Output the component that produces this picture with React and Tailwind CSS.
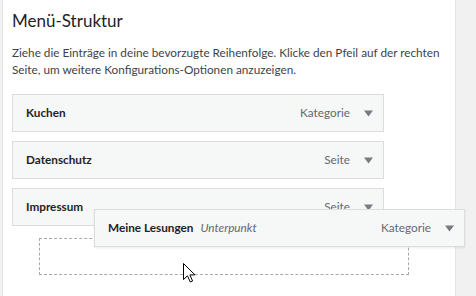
const items = [
  { title: "Kuchen", type: "Kategorie" },
  { title: "Datenschutz", type: "Seite" },
  { title: "Impressum", type: "Seite" },
];

function Arrow() {
  return (
    <svg width="9" height="7" viewBox="0 0 9 7" className="shrink-0">
      <path d="M0 0.5 H9 L4.5 6.5 Z" fill="#787c82" />
    </svg>
  );
}

function MenuItem({ title, type, sub }) {
  return (
    <div className="flex h-[38px] items-center border border-[#dcdcde] bg-[#f6f7f7] pl-[13px] pr-[10px]">
      <span className="font-bold text-[#1d2327]">{title}</span>
      {sub && <span className="ml-[7px] italic text-[#646970]">{sub}</span>}
      <span className="ml-auto text-[#646970]">{type}</span>
      <span className="ml-[14px]">
        <Arrow />
      </span>
    </div>
  );
}

function Cursor() {
  return (
    <svg width="13" height="20" viewBox="0 0 13 20" className="absolute left-[183px] top-[263px]">
      <path
        d="M0.5 0.5 V16.5 L4.5 12.8 L7.3 19 L9.6 18 L6.9 11.9 H12 Z"
        fill="#fff"
        stroke="#000"
        strokeWidth="1"
        strokeLinejoin="round"
      />
    </svg>
  );
}

export default function App() {
  return (
    <div
      className="relative flex h-[296px] w-[476px] overflow-hidden bg-white text-[11.75px]"
      style={{ fontFamily: 'Lato, "Open Sans", sans-serif' }}
    >
      <div className="w-[3px] shrink-0 border-r border-[#e2e4e7] bg-[#f1f1f1]" />
      <div className="flex-1 pl-[9px] pt-[10px]">
        <h2 className="text-[17px] leading-[22px] text-[#1d2327]">Menü-Struktur</h2>
        <p className="mt-[12px] w-[443px] leading-[17px] text-[#3c434a]">
          Ziehe die Einträge in deine bevorzugte Reihenfolge. Klicke den Pfeil auf der rechten Seite, um weitere
          Konfigurations-Optionen anzuzeigen.
        </p>
        <div className="mt-[16px] flex w-[372px] flex-col gap-[9px]">
          {items.map((item) => (
            <MenuItem key={item.title} {...item} />
          ))}
        </div>
        <div className="ml-[27px] mt-[12px] h-[37px] w-[370px] border border-dashed border-[#a7aaad]" />
      </div>
      <div className="w-[21px] shrink-0 border-l border-[#e2e4e7] bg-[#f1f1f1]" />

      <div className="absolute left-[94px] top-[209px] w-[371px] shadow-[0_1px_2px_rgba(0,0,0,0.08)]">
        <MenuItem title="Meine Lesungen" sub="Unterpunkt" type="Kategorie" />
      </div>
      <Cursor />
    </div>
  );
}
